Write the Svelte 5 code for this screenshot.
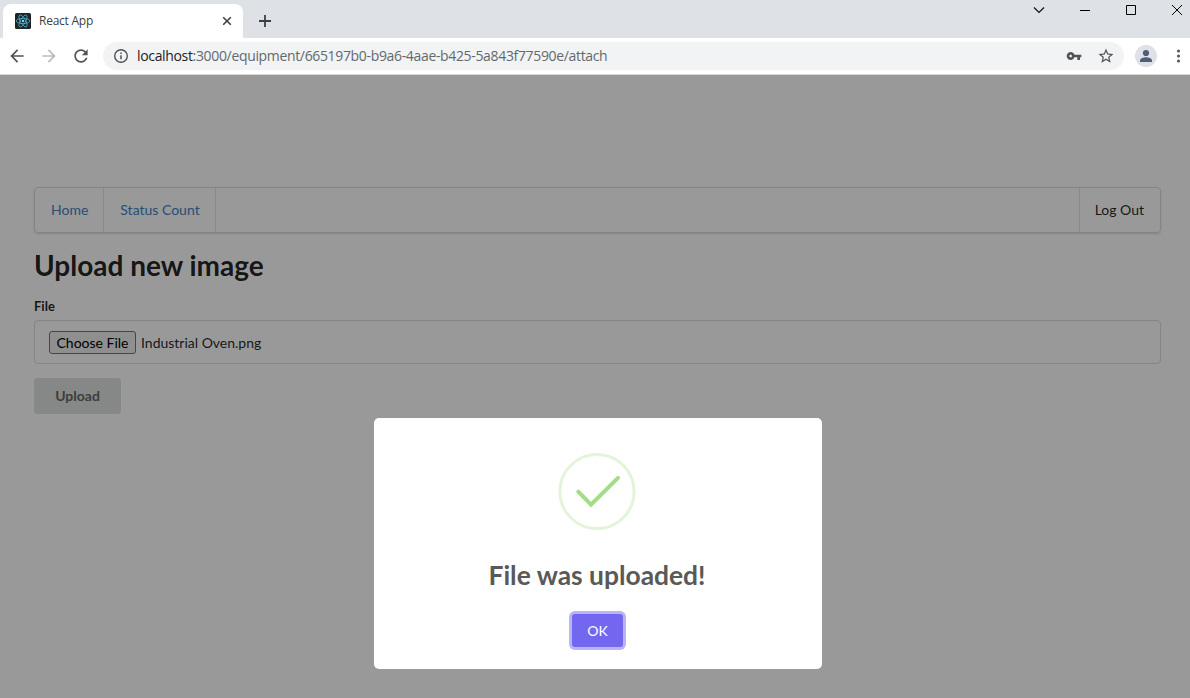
<script>
  const links = ['Home', 'Status Count'];
</script>

<div class="browser">
  <header class="tabs">
    <div class="tab">
      <svg class="favicon" width="16" height="16" viewBox="0 0 16 16">
        <rect width="16" height="16" rx="1.5" fill="#20232a" />
        <g fill="none" stroke="#53c1de" stroke-width=".7">
          <ellipse cx="8" cy="8" rx="6.8" ry="2.6" />
          <ellipse cx="8" cy="8" rx="6.8" ry="2.6" transform="rotate(60 8 8)" />
          <ellipse cx="8" cy="8" rx="6.8" ry="2.6" transform="rotate(120 8 8)" />
        </g>
        <circle cx="8" cy="8" r="1.3" fill="#61dafb" />
      </svg>
      <span class="tab-title">React App</span>
      <svg class="close" width="10" height="10" viewBox="0 0 10 10"><path d="M1.2 1.2l7.6 7.6M8.8 1.2L1.2 8.8" stroke="#3c4043" stroke-width="1.6" /></svg>
    </div>
    <svg class="plus" width="12" height="12" viewBox="0 0 12 12"><path d="M6 0v12M0 6h12" stroke="#3c4043" stroke-width="1.8" /></svg>
    <div class="window">
      <svg width="12" height="12" viewBox="0 0 12 12"><path d="M1 3.5l5 5 5-5" fill="none" stroke="#111" stroke-width="1.2" /></svg>
      <svg width="12" height="12" viewBox="0 0 12 12"><path d="M1 6.5h10" stroke="#000" /></svg>
      <svg width="12" height="12" viewBox="0 0 12 12"><path d="M1.5 1.5h9v9h-9z" fill="none" stroke="#000" /></svg>
      <svg width="12" height="12" viewBox="0 0 12 12"><path d="M1 1l10 10M11 1L1 11" stroke="#000" /></svg>
    </div>
  </header>

  <div class="toolbar">
    <svg class="nav back" width="20" height="20" viewBox="0 0 24 24"><path fill="#505357" d="M20 11H7.83l5.59-5.59L12 4l-8 8 8 8 1.41-1.41L7.83 13H20v-2z" /></svg>
    <svg class="nav" width="20" height="20" viewBox="0 0 24 24"><path fill="#babcbe" d="M12 4l-1.41 1.41L16.17 11H4v2h12.17l-5.58 5.59L12 20l8-8z" /></svg>
    <svg class="nav" width="20" height="20" viewBox="0 0 24 24"><path fill="#505357" d="M17.65 6.35C16.2 4.9 14.21 4 12 4c-4.42 0-7.99 3.58-7.99 8s3.57 8 7.99 8c3.73 0 6.84-2.55 7.73-6h-2.08c-.82 2.33-3.04 4-5.65 4-3.31 0-6-2.69-6-6s2.69-6 6-6c1.66 0 3.14.69 4.22 1.78L13 11h7V4l-2.35 2.35z" /></svg>
    <div class="address">
      <svg class="info" width="16" height="16" viewBox="0 0 16 16"><circle cx="8" cy="8" r="6.3" fill="none" stroke="#505357" stroke-width="1.4" /><path d="M8 7.2v4M8 4.6v1.5" stroke="#505357" stroke-width="1.5" /></svg>
      <span class="url"><b>localhost</b>:3000/equipment/665197b0-b9a6-4aae-b425-5a843f77590e/attach</span>
      <svg class="key" width="16" height="16" viewBox="0 0 24 24"><path fill="#505357" d="M12.65 10C11.83 7.67 9.61 6 7 6c-3.31 0-6 2.69-6 6s2.69 6 6 6c2.61 0 4.83-1.67 5.65-4H17v4h4v-4h2v-4H12.65zM7 14c-1.1 0-2-.9-2-2s.9-2 2-2 2 .9 2 2-.9 2-2 2z" /></svg>
      <svg class="star" width="18" height="18" viewBox="0 0 24 24"><path fill="#505357" d="M22 9.24l-7.19-.62L12 2 9.19 8.63 2 9.24l5.46 4.73L5.82 21 12 17.27 18.18 21l-1.63-7.03L22 9.24zM12 15.4l-3.76 2.27 1-4.28-3.32-2.88 4.38-.38L12 6.1l1.71 4.04 4.38.38-3.32 2.88 1 4.28L12 15.4z" /></svg>
    </div>
    <svg class="avatar" width="22" height="22" viewBox="0 0 22 22"><circle cx="11" cy="11" r="11" fill="#dee1e6" /><circle cx="11" cy="8" r="3.1" fill="#515c76" /><path d="M5 17v-1.6c0-2.1 3.8-3.2 6-3.2s6 1.100 6 3.200V17z" fill="#515c76" /></svg>
    <svg class="dots" width="4" height="16" viewBox="0 0 4 16"><g fill="#505357"><circle cx="2.500" cy="3" r="1.5" /><circle cx="2.500" cy="8" r="1.5" /><circle cx="2.500" cy="13" r="1.5" /></g></svg>
  </div>

  <main>
    <nav>
      {#each links as link}
        <a href="#top">{link}</a>
      {/each}
      <span class="logout">Log Out</span>
    </nav>
    <h1>Upload new image</h1>
    <label for="choose">File</label>
    <div class="field">
      <button id="choose" class="choose">Choose File</button>
      <span>Industrial Oven.png</span>
    </div>
    <button class="upload">Upload</button>

    <div class="overlay">
      <div class="modal">
        <svg width="78" height="78" viewBox="0 0 78 78" fill="none">
          <circle cx="39" cy="39.500" r="37.100" stroke="#e4f4da" stroke-width="3" />
          <path d="M20.300 39.700L33 52.700L60 25.800" stroke="#a5dc86" stroke-width="4" stroke-linecap="round" />
        </svg>
        <h2>File was uploaded!</h2>
        <button class="ok">OK</button>
      </div>
    </div>
  </main>
</div>

<style>
  :global(body) { margin: 0; overflow: hidden; }
  * { box-sizing: border-box; }
  svg { display: block; flex: none; }
  button { font-family: Lato, sans-serif; margin: 0; }
  .browser { width: 1190px; height: 698px; display: flex; flex-direction: column; font: 14px/20px Lato, sans-serif; }
  .tabs { height: 38px; flex: none; background: #dee1e6; display: flex; align-items: flex-start; }
  .tab { width: 240px; height: 34px; margin: 4px 0 0 3px; padding: 0 11px 0 12px; border-radius: 8px 8px 0 0; background: #fff; display: flex; align-items: center; box-shadow: 0 4px #fff; }
  .tab-title { font: 12px/16px "Open Sans", sans-serif; letter-spacing: -.25px; color: #3c4043; margin-left: 8px; white-space: nowrap; }
  .close { margin-left: auto; }
  .plus { margin: 15px 0 0 16px; }
  .window { margin: 4px 7px 0 auto; display: flex; gap: 34px; }
  .toolbar { height: 37px; flex: none; background: #fff; border-bottom: 1px solid #d5d7da; display: flex; align-items: center; }
  .nav { margin-left: 12px; }
  .nav.back { margin-left: 7px; }
  .address { width: 1021px; height: 28px; margin-left: 12px; padding: 0 9px 0 10px; border-radius: 14px; background: #f1f3f4; display: flex; align-items: center; }
  .url { margin-left: 8px; font: 14px/20px "Open Sans", sans-serif; letter-spacing: -.34px; color: #65696e; white-space: nowrap; }
  .url b { font-weight: 400; color: #202124; }
  .key { margin-left: auto; }
  .star { margin-left: 15px; }
  .avatar { margin-left: 11px; }
  .dots { margin-left: 19px; }
  main { position: relative; flex: 1; padding: 112px 29px 0 34px; background: #fff; color: rgba(0, 0, 0, .87); }
  nav { height: 46px; display: flex; border: 1px solid #ddddde; border-radius: 4px; box-shadow: 0 1px 2px rgba(34, 36, 38, .15); }
  nav a, .logout { display: flex; align-items: center; padding: 0 15px 1px 16px; border-right: 1px solid #e5e5e6; color: #4183c4; text-decoration: none; }
  .logout { margin-left: auto; padding: 0 16px 1px 15px; border-right: 0; border-left: 1px solid #e5e5e6; color: rgba(0, 0, 0, .87); }
  h1 { margin: 14px 0 0; font-size: 28px; line-height: 36px; font-weight: 700; }
  label { display: block; margin-top: 14px; font-size: 13px; line-height: 18px; font-weight: 700; }
  .field { height: 44px; margin-top: 5px; padding: 0 14px; border: 1px solid #dededf; border-radius: 4px; display: flex; align-items: center; gap: 5px; }
  .field span { padding-top: 2px; }
  .choose { width: 87px; height: 23px; padding: 1px 0 0; border: 1px solid #767676; border-radius: 3px; background: #efefef; color: #000; font-size: 14px; line-height: 20px; }
  .upload { display: block; width: 87px; height: 36px; margin-top: 14px; padding: 0 0 2px; border: 0; border-radius: 4px; background: #e0e1e2; color: #676767; font-size: 14px; font-weight: 700; }
  .overlay { position: absolute; inset: 0; display: flex; align-items: flex-start; justify-content: center; padding: 343px 0 0 6px; background: rgba(0, 0, 0, .4); }
  .modal { width: 448px; height: 251px; padding: 34px 0 0; border-radius: 5px; background: #fff; display: flex; flex-direction: column; align-items: center; }
  .modal svg { margin-right: 2px; }
  h2 { margin: 27px 2px 0 0; font-size: 26.4px; line-height: 36px; font-weight: 700; color: #595959; }
  .ok { width: 51px; height: 33px; margin: 21px 1px 0 0; padding: 0; border: 0; border-radius: 3px; background: #7367f0; box-shadow: 0 0 0 3px #b9b3f7; color: #fff; font-size: 14px; }
</style>
